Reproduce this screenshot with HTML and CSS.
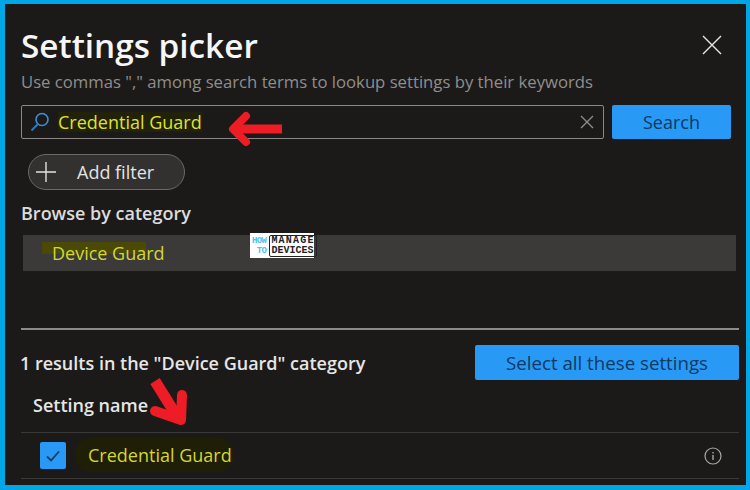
FILE: index.html
```html
<!DOCTYPE html>
<html lang="en">
<head>
    <meta charset="UTF-8">
    <title>Settings picker</title>
    <link rel="stylesheet" href="styles.css">
</head>
<body>
    <div class="panel">
        <div class="head">
            <h1>Settings picker</h1>
            <svg class="close" width="20" height="20" viewBox="0 0 20 20"><path d="M1 1 L19 19 M19 1 L1 19" stroke="#e6e6e6" stroke-width="1.4" fill="none"/></svg>
        </div>
        <p class="hint">Use commas "," among search terms to lookup settings by their keywords</p>
        <div class="search-row">
            <div class="search-box">
                <svg class="glass" width="20" height="20" viewBox="0 0 20 20"><circle cx="12" cy="7.5" r="6" stroke="#3f8fd0" stroke-width="1.6" fill="none"/><path d="M8 12 L1.5 18.5" stroke="#2f78b8" stroke-width="2" fill="none"/></svg>
                <span class="term">Credential Guard</span>
                <svg class="clear" width="14" height="14" viewBox="0 0 14 14"><path d="M1 1 L13 13 M13 1 L1 13" stroke="#8f8f8f" stroke-width="1.3" fill="none"/></svg>
            </div>
            <button class="btn search-btn">Search</button>
        </div>
        <div class="pill">
            <svg width="20" height="20" viewBox="0 0 20 20"><path d="M10 0 V20 M0 10 H20" stroke="#e2e2e2" stroke-width="1.4" fill="none"/></svg>
            <span>Add filter</span>
        </div>
        <h2 class="browse">Browse by category</h2>
        <div class="category"><span class="mark device">Device Guard</span></div>
        <div class="logo">
            <span class="how">HOW<br>TO</span>
            <span class="manage"><span class="wide">MANAGE</span><br>DEVICES</span>
        </div>
        <div class="divider"></div>
        <div class="results">
            <span class="count">1 results in the "Device Guard" category</span>
            <button class="btn select-btn">Select all these settings</button>
        </div>
        <div class="col-head">Setting name</div>
        <div class="row">
            <span class="check"><svg width="16" height="14" viewBox="0 0 16 14"><path d="M2 7.5 L6 11.5 L14 2.5" stroke="#123a5e" stroke-width="1.8" fill="none"/></svg></span>
            <span class="mark row-name">Credential Guard</span>
            <svg class="info" width="18" height="18" viewBox="0 0 18 18"><circle cx="9" cy="9" r="8" stroke="#a8a8a8" stroke-width="1.2" fill="none"/><path d="M9 8 V13 M9 5 V6.4" stroke="#a8a8a8" stroke-width="1.4" fill="none"/></svg>
        </div>

        <svg class="arrow arrow-left" width="60" height="36" viewBox="0 0 60 36"><path d="M60 18 H12" stroke="#ee1c25" stroke-width="9" fill="none"/><path d="M24 5 L11 18 L24 31" stroke="#ee1c25" stroke-width="8" stroke-linecap="round" stroke-linejoin="round" fill="none"/></svg>
        <svg class="arrow arrow-down" width="50" height="60" viewBox="0 0 50 60"><path d="M12 9 L35 46" stroke="#ee1c25" stroke-width="11" fill="none"/><path d="M39 23 L38 48 L12 39" stroke="#ee1c25" stroke-width="10" stroke-linejoin="round" stroke-linecap="round" fill="none"/></svg>
    </div>
</body>
</html>
```

FILE: styles.css
```css
html, body { margin: 0; height: 100%; }
body { background: #1b1a19; color: #fff; font-family: "Open Sans", "Noto Sans", sans-serif; }
.panel { position: relative; z-index: 0; width: 750px; height: 490px; box-sizing: border-box; background: #1b1a19; border: solid #00a6e6; border-width: 4px 4px 5px 5px; padding: 20px 7px 0 16px; overflow: hidden; }

.head { display: flex; justify-content: space-between; align-items: center; height: 42px; padding-right: 17px; }
h1 { margin: 0; font-size: 33.3px; font-weight: 600; line-height: 42px; color: #f6f6f6; }
.hint { margin: 4px 0 0; font-size: 16.7px; line-height: 24px; color: #8f8e8d; }

.search-row { display: flex; gap: 8px; margin-top: 11px; padding-right: 8px; }
.search-box { flex: 1; height: 34px; box-sizing: border-box; display: flex; align-items: center; border: 1px solid #8a8886; border-radius: 2px; padding: 0 9px 0 8px; }
.glass { margin-right: 8px; }
.term { margin-right: auto; font-size: 18px; line-height: 20px; color: #dfe22c; background: #22220a; }
.btn { border: none; border-radius: 2px; background: #2899f5; color: #0f3a63; font-family: inherit; font-size: 18px; font-weight: 500; padding: 0; }
.search-btn { width: 119px; height: 34px; }

.pill { display: flex; align-items: center; gap: 21px; width: 157px; height: 36px; box-sizing: border-box; margin: 15px 0 0 7px; padding-left: 7px; border: 1px solid #6b6a69; border-radius: 18px; background: #323130; font-size: 18px; color: #e4e4e4; }

.browse { margin: 11px 0 0; font-size: 18px; font-weight: 600; line-height: 24px; color: #dcdcdc; }
.category { position: relative; z-index: 0; display: flex; align-items: center; height: 36px; margin: 10px 3px 0 2px; padding-left: 29px; background: #3b3a39; font-size: 18px; }
.mark { position: relative; color: #d4d72e; }
.device::before { content: ""; position: absolute; z-index: -1; left: -10px; top: 1px; width: 104px; height: 12px; background: #4a4a06; }

.logo { position: absolute; left: 245px; top: 229px; width: 64px; height: 25px; display: flex; align-items: center; gap: 3px; box-sizing: border-box; padding: 1px 2px; background: #fff; font-family: "Liberation Mono", monospace; font-size: 10px; line-height: 10px; font-weight: 700; }
.how { flex: 1; color: #4cc3ee; text-align: right; font-size: 9px; letter-spacing: -0.6px; }
.manage { color: #222; border: 1px solid #222; border-radius: 2px; padding: 0 1px; white-space: nowrap; }
.wide { letter-spacing: 1.2px; }

.divider { height: 2px; margin-top: 57px; background: #8c8b8a; }
.results { display: flex; justify-content: space-between; align-items: center; margin-top: 15px; }
.count { margin-left: -1px; font-size: 18px; font-weight: 600; color: #e6e6e6; }
.select-btn { width: 264px; height: 35px; font-size: 18.7px; }

.col-head { height: 52px; line-height: 50px; padding-left: 12px; font-size: 18px; font-weight: 600; color: #e6e6e6; border-bottom: 1px solid #3b3a39; }
.row { display: flex; align-items: center; height: 45px; border-bottom: 1px solid #3b3a39; padding-left: 19px; }
.check { display: flex; align-items: center; justify-content: center; width: 26px; height: 27px; border-radius: 2px; background: #2899f5; }
.row-name { margin: 0 0 1px 22px; font-size: 18px; }
.row-name::before { content: ""; position: absolute; z-index: -1; left: -13px; right: -2px; top: -5px; bottom: -5px; border-radius: 16px; background: #1f1e07; }
.info { margin: 0 17px 0 auto; }

.arrow { position: absolute; }
.arrow-left { left: 217px; top: 107px; }
.arrow-down { left: 138px; top: 368px; }
```
